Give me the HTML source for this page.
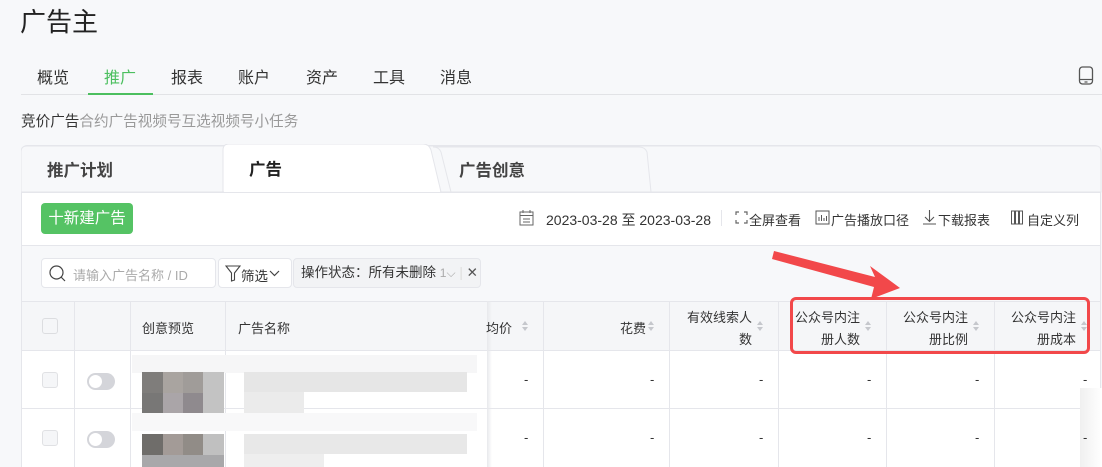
<!DOCTYPE html>
<html><head><meta charset="utf-8"><style>
*{box-sizing:border-box;margin:0;padding:0}
html,body{width:1102px;height:467px;overflow:hidden}
body{background:#f7f8fa;font-family:"Liberation Sans","Noto Sans CJK SC",sans-serif;color:#333;position:relative}
.a{position:absolute}
.nav span{position:absolute;top:64px;font-size:16px;color:#333}
.hd{font-size:13px;color:#333;white-space:nowrap}
.dash{position:absolute;font-size:13px;color:#333}
.vl{position:absolute;width:1px;background:#e5e6eb}
.hl{position:absolute;height:1px;background:#e5e6eb}
.st{position:absolute;width:7px;height:12px}
.st:before{content:"";position:absolute;left:0;top:0;border:3.5px solid transparent;border-bottom:4.5px solid #c5c7cc;border-top:0}
.st:after{content:"";position:absolute;left:0;top:6px;border:3.5px solid transparent;border-top:4.5px solid #c5c7cc;border-bottom:0}
</style></head><body>
<div class="a" style="left:20px;top:2px;font-size:26px;color:#222">广告主</div>
<div class="nav">
<span style="left:37px">概览</span><span style="left:104px;color:#4cbf5f">推广</span><span style="left:171px">报表</span><span style="left:238px">账户</span><span style="left:306px">资产</span><span style="left:373px">工具</span><span style="left:440px">消息</span>
</div>
<div class="a" style="left:21px;top:94px;width:1081px;height:1px;background:#e2e3e6"></div>
<div class="a" style="left:88px;top:93px;width:65px;height:2px;background:#4cbf5f"></div>
<svg class="a" style="left:1078px;top:66px" width="16" height="20" viewBox="0 0 16 20"><rect x="1.5" y="1" width="13" height="17" rx="3" fill="none" stroke="#555" stroke-width="1.3"/><line x1="1.5" y1="13.5" x2="14.5" y2="13.5" stroke="#555" stroke-width="1.2"/><line x1="6.5" y1="16" x2="9.5" y2="16" stroke="#555" stroke-width="1.2"/></svg>
<div class="a" style="left:21px;top:110px;font-size:14.6px;color:#333">竞价广告<span style="color:#999">合约广告视频号互选视频号小任务</span></div>

<div class="a" style="left:21px;top:145px;width:1080px;height:322px;background:#fff;border:1px solid #e5e6eb;border-bottom:0;border-radius:6px 6px 0 0;overflow:hidden"></div>
<svg class="a" style="left:21px;top:144px" width="1081" height="50">
<path d="M0 48 V8 Q0 2 6 2 H1075 Q1080 2 1080 8 V48 Z" fill="#f7f8fa" stroke="#e5e6eb"/>
<path d="M430 48 L420 8 Q418 3 412 3 H618 Q624 3 626 8 L630 48 Z" fill="#f7f8fa" stroke="#e5e6eb"/>
<path d="M202 48 V6 Q202 0 208 0 H402 Q408 0 410 6 L420 48 Z" fill="#fff" stroke="#e5e6eb"/>
<rect x="203" y="47" width="216" height="3" fill="#fff"/>
</svg>
<div class="a" style="left:22px;top:192px;width:1078px;height:1px;background:#e5e6eb"></div>
<div class="a" style="left:47px;top:157px;font-size:16.5px;font-weight:bold;color:#444">推广计划</div>
<div class="a" style="left:249px;top:156px;font-size:16.5px;font-weight:bold;color:#222">广告</div>
<div class="a" style="left:459px;top:157px;font-size:16.5px;font-weight:bold;color:#444">广告创意</div>

<div class="a" style="left:41px;top:203px;width:92px;height:31px;background:#55c364;border-radius:4px;color:#fff;font-size:15.5px;line-height:31px;text-align:center">十新建广告</div>
<svg class="a" style="left:519px;top:210px" width="15" height="16" viewBox="0 0 15 16"><rect x="1" y="2" width="13" height="13" fill="none" stroke="#666"/><line x1="1" y1="5.5" x2="14" y2="5.5" stroke="#666"/><line x1="4" y1="0" x2="4" y2="3" stroke="#666"/><line x1="11" y1="0" x2="11" y2="3" stroke="#666"/><line x1="4" y1="9" x2="11" y2="9" stroke="#666"/><line x1="4" y1="12" x2="11" y2="12" stroke="#666"/></svg>
<div class="a" style="left:546px;top:210px;font-size:14px;color:#333;white-space:nowrap">2023-03-28 至 2023-03-28</div>
<div class="a" style="left:721px;top:210px;width:1px;height:16px;background:#e5e6eb"></div>
<svg class="a" style="left:735px;top:211px" width="13" height="13"><path d="M1 4V1H4M9 1H12V4M12 9V12H9M4 12H1V9" fill="none" stroke="#666" stroke-width="1.2"/></svg>
<div class="a" style="left:749px;top:210px;font-size:13px;color:#333">全屏查看</div>
<svg class="a" style="left:815px;top:210px" width="15" height="15"><rect x="1" y="1" width="13" height="13" fill="none" stroke="#555"/><path d="M4 11V7M6.5 11V5M9 11V8M11.5 11V6" stroke="#555"/></svg>
<div class="a" style="left:831px;top:210px;font-size:13px;color:#333">广告播放口径</div>
<svg class="a" style="left:922px;top:209px" width="15" height="16"><path d="M7.5 1V12M3 8L7.5 12.5L12 8M1 15H14" fill="none" stroke="#555" stroke-width="1.1"/></svg>
<div class="a" style="left:938px;top:210px;font-size:13px;color:#333">下载报表</div>
<svg class="a" style="left:1010px;top:210px" width="16" height="15"><path d="M1.5 1V14H4.5V1ZM5.5 1V14H8.5V1ZM9.5 1V14H12.5V1Z" fill="none" stroke="#555"/></svg>
<div class="a" style="left:1027px;top:210px;font-size:13px;color:#333">自定义列</div>

<div class="a" style="left:22px;top:245px;width:1078px;height:56px;background:#f7f8fa;border-top:1px solid #e5e6eb"></div>
<div class="a" style="left:41px;top:258px;width:175px;height:30px;background:#fff;border:1px solid #e5e6eb;border-radius:4px"></div>
<svg class="a" style="left:49px;top:265px" width="17" height="17"><circle cx="7.5" cy="7.5" r="6.5" fill="none" stroke="#444" stroke-width="1.2"/><line x1="12" y1="12" x2="16" y2="16" stroke="#444" stroke-width="1.2"/></svg>
<div class="a" style="left:73px;top:265px;font-size:13px;color:#aaa">请输入广告名称 / ID</div>
<div class="a" style="left:218px;top:258px;width:74px;height:30px;background:#fff;border:1px solid #e5e6eb;border-radius:4px"></div>
<svg class="a" style="left:225px;top:265px" width="16" height="17"><path d="M1 1H15L9.5 8V15L6.5 16V8Z" fill="none" stroke="#444" stroke-width="1.1"/></svg>
<div class="a" style="left:241px;top:265px;font-size:13.5px;color:#333">筛选</div>
<svg class="a" style="left:269px;top:270px" width="11" height="7"><path d="M1 1L5.5 5.5L10 1" fill="none" stroke="#444" stroke-width="1.2"/></svg>
<div class="a" style="left:293px;top:258px;width:188px;height:30px;background:#f2f3f5;border:1px solid #e5e6eb;border-radius:4px;font-size:13.5px;line-height:28px;padding-left:7px;color:#333;white-space:nowrap">操作状态：所有未删除 <span style="color:#aaa;font-size:12px">1⌵</span> <span style="color:#ddd">|</span> <span style="color:#555">✕</span></div>

<div class="a" style="left:22px;top:301px;width:1078px;height:50px;background:#f5f6f8;border-top:1px solid #e5e6eb;border-bottom:1px solid #e5e6eb"></div>
<div class="a" style="left:22px;top:351px;width:1058px;height:116px;background:#fff"></div>
<div class="hl" style="left:22px;top:408px;width:1058px"></div>
<div class="vl" style="left:74px;top:301px;height:166px"></div>
<div class="vl" style="left:130px;top:301px;height:166px"></div>
<div class="vl" style="left:225px;top:301px;height:166px"></div>
<div class="a" style="left:487px;top:301px;width:5px;height:166px;background:linear-gradient(90deg,#e8e9ec,rgba(255,255,255,0))"></div>
<div class="vl" style="left:543px;top:301px;height:166px"></div>
<div class="vl" style="left:669px;top:301px;height:166px"></div>
<div class="vl" style="left:778px;top:301px;height:166px"></div>
<div class="vl" style="left:886px;top:301px;height:166px"></div>
<div class="vl" style="left:994px;top:301px;height:166px"></div>
<div class="a" style="left:1080px;top:388px;width:22px;height:79px;background:linear-gradient(90deg,#f0f0f0,#fff)"></div>

<div class="a" style="left:42px;top:318px;width:16px;height:16px;border:1px solid #dcdde0;border-radius:3px;background:#f5f6f8"></div>
<div class="a hd" style="left:142px;top:318px">创意预览</div>
<div class="a hd" style="left:238px;top:318px">广告名称</div>
<div class="a hd" style="left:486px;top:318px">均价</div><div class="st" style="left:522px;top:321px"></div>
<div class="a hd" style="left:620px;top:318px">花费</div><div class="st" style="left:648px;top:321px"></div>
<div class="a hd" style="left:680px;top:307px;line-height:22px;text-align:right;width:72px">有效线索人<br>数</div><div class="st" style="left:757px;top:321px"></div>
<div class="a hd" style="left:790px;top:307px;line-height:22px;text-align:right;width:70px">公众号内注<br>册人数</div><div class="st" style="left:865px;top:321px"></div>
<div class="a hd" style="left:898px;top:307px;line-height:22px;text-align:right;width:70px">公众号内注<br>册比例</div><div class="st" style="left:973px;top:321px"></div>
<div class="a hd" style="left:1006px;top:307px;line-height:22px;text-align:right;width:70px">公众号内注<br>册成本</div><div class="st" style="left:1081px;top:321px"></div>

<div class="a" style="left:42px;top:372px;width:16px;height:16px;border:1px solid #e0e1e4;border-radius:3px;background:#f5f6f8"></div>
<div class="a" style="left:42px;top:430px;width:16px;height:16px;border:1px solid #e0e1e4;border-radius:3px;background:#f5f6f8"></div>
<div class="a" style="left:87px;top:373px;width:28px;height:17px;border-radius:9px;background:#d4d5da"><div style="margin:2px;width:13px;height:13px;border-radius:50%;background:#fff"></div></div>
<div class="a" style="left:87px;top:431px;width:28px;height:17px;border-radius:9px;background:#d4d5da"><div style="margin:2px;width:13px;height:13px;border-radius:50%;background:#fff"></div></div>
<div class="a" style="left:132px;top:355px;width:345px;height:18px;background:#f6f6f7"></div>
<div class="a" style="left:132px;top:413px;width:345px;height:18px;background:#f8f8f9"></div>
<svg class="a" style="left:142px;top:372px" width="82" height="95">
<rect x="0" y="0" width="21" height="21" fill="#7f7d7b"/><rect x="21" y="0" width="20" height="21" fill="#a9a4a0"/><rect x="41" y="0" width="20" height="21" fill="#a09c99"/><rect x="61" y="0" width="21" height="21" fill="#c3c3c3"/>
<rect x="0" y="21" width="21" height="20" fill="#787776"/><rect x="21" y="21" width="20" height="20" fill="#aaa5a8"/><rect x="41" y="21" width="20" height="20" fill="#8f8a8e"/><rect x="61" y="21" width="21" height="20" fill="#c3c3c3"/>
<rect x="0" y="62" width="21" height="21" fill="#6f6d6a"/><rect x="21" y="62" width="20" height="21" fill="#a39b97"/><rect x="41" y="62" width="20" height="21" fill="#918c87"/><rect x="61" y="62" width="21" height="21" fill="#c0c0c0"/>
<rect x="0" y="83" width="82" height="12" fill="#a8a8aa"/>
</svg>
<div class="a" style="left:244px;top:372px;width:223px;height:20px;background:#e6e6e6"></div>
<div class="a" style="left:244px;top:392px;width:60px;height:21px;background:#ebebeb"></div>
<div class="a" style="left:244px;top:434px;width:223px;height:20px;background:#e8e8e8"></div>
<div class="a" style="left:244px;top:454px;width:80px;height:13px;background:#eeeeee"></div>
<div class="dash" style="left:524px;top:372px">-</div><div class="dash" style="left:524px;top:430px">-</div>
<div class="dash" style="left:650px;top:372px">-</div><div class="dash" style="left:650px;top:430px">-</div>
<div class="dash" style="left:759px;top:372px">-</div><div class="dash" style="left:759px;top:430px">-</div>
<div class="dash" style="left:867px;top:372px">-</div><div class="dash" style="left:867px;top:430px">-</div>
<div class="dash" style="left:975px;top:372px">-</div><div class="dash" style="left:975px;top:430px">-</div>
<div class="dash" style="left:1083px;top:372px">-</div><div class="dash" style="left:1083px;top:430px">-</div>

<div class="a" style="left:790px;top:297px;width:300px;height:57px;border:3px solid #f2484a;border-radius:6px"></div>
<svg class="a" style="left:760px;top:240px" width="160" height="60"><path d="M14 11 L115 37 L110 26 L140 48 L111 59 L114 47 L12 19 Z" fill="#f2484a"/></svg>
</body></html>
